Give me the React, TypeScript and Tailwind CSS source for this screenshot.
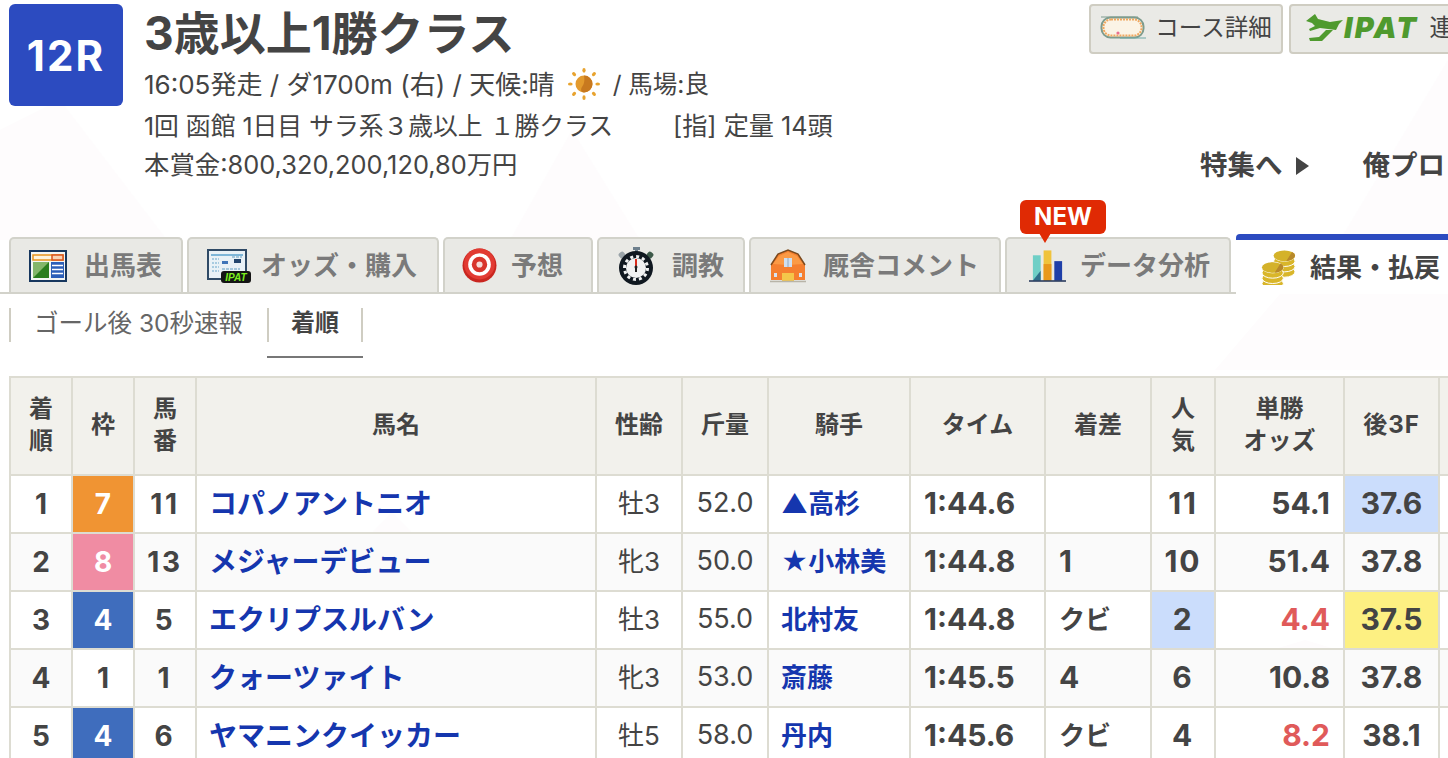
import React from 'react';

const FONT = "font-['Inter','Noto_Sans_CJK_JP',sans-serif]";

const WAKU: Record<number, string> = {
  1: 'bg-white text-[#444]',
  4: 'bg-[#3f6dbd] text-white',
  7: 'bg-[#f09433] text-white',
  8: 'bg-[#f08ca3] text-white',
};

interface Row {
  pos: number;
  waku: number;
  num: number;
  name: string;
  sex: string;
  weight: string;
  jockey: string;
  time: string;
  margin: string;
  pop: number;
  popHit?: boolean;
  odds: string;
  oddsRed?: boolean;
  last: string;
  lastBg?: string;
}

const rows: Row[] = [
  { pos: 1, waku: 7, num: 11, name: 'コパノアントニオ', sex: '牡3', weight: '52.0', jockey: '▲高杉', time: '1:44.6', margin: '', pop: 11, odds: '54.1', last: '37.6', lastBg: 'bg-[#cbddfc]' },
  { pos: 2, waku: 8, num: 13, name: 'メジャーデビュー', sex: '牝3', weight: '50.0', jockey: '★小林美', time: '1:44.8', margin: '1', pop: 10, odds: '51.4', last: '37.8' },
  { pos: 3, waku: 4, num: 5, name: 'エクリプスルバン', sex: '牡3', weight: '55.0', jockey: '北村友', time: '1:44.8', margin: 'クビ', pop: 2, popHit: true, odds: '4.4', oddsRed: true, last: '37.5', lastBg: 'bg-[#fdf082]' },
  { pos: 4, waku: 1, num: 1, name: 'クォーツァイト', sex: '牝3', weight: '53.0', jockey: '斎藤', time: '1:45.5', margin: '4', pop: 6, odds: '10.8', last: '37.8' },
  { pos: 5, waku: 4, num: 6, name: 'ヤマニンクイッカー', sex: '牡5', weight: '58.0', jockey: '丹内', time: '1:45.6', margin: 'クビ', pop: 4, odds: '8.2', oddsRed: true, last: '38.1' },
];

const TrackIcon = () => (
  <svg width="46" height="24" viewBox="0 0 46 24" className="shrink-0">
    <path d="M1 1H38" stroke="#7f9c90" strokeWidth="1" />
    <rect x="1.5" y="1.5" width="42" height="20" rx="9" fill="#fbf4e6" stroke="#7d9c8e" strokeWidth="2" />
    <rect x="3.5" y="3.5" width="38" height="16" rx="7.5" fill="none" stroke="#f0a860" strokeWidth="2" strokeDasharray="2 1" />
    <circle cx="18" cy="17" r="1.6" fill="#ea6f8f" />
    <path d="M20 22H46" stroke="#6fa9a6" strokeWidth="1" />
  </svg>
);

const HorseIcon = () => (
  <svg width="37" height="28" viewBox="0 0 37 28" className="shrink-0">
    <path d="M0 7L9 0l3 5 12 3 13-2-4 4-3 6-8-1-8-1-10 3-1-2 6-3-3-3z" fill="#4f9a2e" />
    <path d="M20 16h7L16 27H4l-1-3 10-1z" fill="#4f9a2e" />
  </svg>
);

const SunIcon = () => (
  <svg width="34" height="34" viewBox="0 0 36 36" className="shrink-0">
    <circle cx="18" cy="18" r="9" fill="#e39a2d" />
    <path d="M18 9a9 9 0 0 1 0 18c-3 0-4-3-2-6s3-6 2-12z" fill="#c8791f" />
    <g fill="#e8a32e">
      <ellipse cx="18" cy="3.5" rx="1.7" ry="2.5" />
      <ellipse cx="18" cy="32.5" rx="1.7" ry="2.5" />
      <ellipse cx="3.5" cy="18" rx="2.5" ry="1.7" />
      <ellipse cx="32.5" cy="18" rx="2.5" ry="1.7" />
      <ellipse cx="7.5" cy="7.5" rx="1.8" ry="2.4" transform="rotate(-45 7.5 7.5)" />
      <ellipse cx="28.5" cy="7.5" rx="1.8" ry="2.4" transform="rotate(45 28.5 7.5)" />
      <ellipse cx="7.5" cy="28.5" rx="1.8" ry="2.4" transform="rotate(45 7.5 28.5)" />
      <ellipse cx="28.5" cy="28.5" rx="1.8" ry="2.4" transform="rotate(-45 28.5 28.5)" />
    </g>
  </svg>
);

const CardIcon = () => (
  <svg width="38" height="32" viewBox="0 0 38 32" className="shrink-0">
    <rect x="1" y="1" width="36" height="30" fill="#f4f6f4" stroke="#17375e" strokeWidth="2" />
    <rect x="4" y="5" width="30" height="5" fill="#fdf3dc" stroke="#e8941c" strokeWidth="1.5" />
    <rect x="23" y="5" width="11" height="5" fill="#f7d3b4" stroke="#d9531e" strokeWidth="1.5" />
    <rect x="4" y="12" width="16" height="16" fill="#84b66b" />
    <path d="M20 12v16H4z" fill="#2a7d1e" />
    <rect x="22" y="12" width="13" height="16" fill="#2c5fb8" />
    <path d="M23 15.5h11M23 19.5h11M23 23.5h11" stroke="#fff" strokeWidth="1.4" />
  </svg>
);

const OddsIcon = () => (
  <svg width="44" height="34" viewBox="0 0 44 34" className="shrink-0">
    <rect x="1" y="1" width="38" height="29" fill="#e9f1f6" stroke="#2f4a66" strokeWidth="2" />
    <path d="M4 6h32" stroke="#7eb6d8" strokeWidth="2" />
    <path d="M5 10h7M5 14h7M5 18h7M5 22h7" stroke="#a8cbe0" strokeWidth="2" strokeDasharray="2 1" />
    <rect x="15" y="12" width="6" height="3" fill="#3f74b8" />
    <rect x="27" y="10" width="7" height="4" fill="#24466e" />
    <path d="M25 8h10M15 20h18" stroke="#8fb9d4" strokeWidth="1.5" strokeDasharray="3 1" />
    <rect x="14" y="22" width="30" height="12" rx="3" fill="#141414" />
    <text x="29" y="32" textAnchor="middle" fontSize="10" fontWeight="800" fontStyle="italic" fill="#7cf01c" fontFamily="'Liberation Sans',sans-serif">IPAT</text>
  </svg>
);

const TargetIcon = () => (
  <svg width="35" height="35" viewBox="0 0 34 34" className="shrink-0">
    <circle cx="17" cy="17" r="16.5" fill="#c9261f" />
    <circle cx="17" cy="15.5" r="15" fill="#e23b33" />
    <circle cx="17" cy="16" r="11" fill="#fff" />
    <circle cx="17" cy="16" r="7.5" fill="#d8352c" />
    <circle cx="17" cy="16" r="3" fill="#f6dcd8" />
  </svg>
);

const WatchIcon = () => (
  <svg width="38" height="38" viewBox="0 0 38 38" className="shrink-0">
    <rect x="16" y="0" width="7" height="3" fill="#6d7f8c" />
    <rect x="18" y="2" width="3" height="4" fill="#6d7f8c" />
    <rect x="2" y="5" width="6" height="6" rx="2" fill="#9aa3a8" transform="rotate(-40 5 8)" />
    <rect x="30" y="5" width="6" height="6" rx="2" fill="#3e5a4a" transform="rotate(40 33 8)" />
    <circle cx="19" cy="21" r="17" fill="#101820" />
    <circle cx="19" cy="21" r="10" fill="#f1f2f2" />
    <circle cx="19" cy="21" r="11.5" fill="none" stroke="#f1f2f2" strokeWidth="3" strokeDasharray="3 3" />
    <path d="M19 12v7" stroke="#d92c1c" strokeWidth="2" />
    <path d="M19 19v6" stroke="#222" strokeWidth="2" />
    <circle cx="19" cy="20" r="1.5" fill="#222" />
  </svg>
);

const BarnIcon = () => (
  <svg width="36" height="34" viewBox="0 0 36 34" className="shrink-0">
    <path d="M1 31V16L8 5l10-4 10 4 7 11v15z" fill="#f57f2f" />
    <path d="M1 16L8 5l10-4 10 4 7 11" fill="none" stroke="#7b4a1e" strokeWidth="1.5" />
    <path d="M3 15l6-8 9-4 9 4 6 8-15 1z" fill="#fb9a45" />
    <rect x="14" y="9" width="8" height="9" fill="#cfdff0" />
    <path d="M18 9v9" stroke="#8fa8c0" />
    <rect x="12" y="24" width="12" height="8" fill="#f4c64a" />
    <rect x="4" y="24" width="3" height="4" fill="#d7e4f2" />
    <rect x="29" y="24" width="3" height="4" fill="#d7e4f2" />
    <path d="M0 32.5h36" stroke="#b8b4a8" strokeWidth="1.5" />
  </svg>
);

const ChartIcon = () => (
  <svg width="37" height="34" viewBox="0 0 38 34" className="shrink-0">
    <rect x="4" y="6" width="8" height="26" fill="#6fcfc6" />
    <path d="M4 32l8-10v10z" fill="#2f6f8a" />
    <rect x="15" y="1" width="8" height="31" fill="#f0c33c" />
    <rect x="15" y="15" width="8" height="17" fill="#e8981c" />
    <rect x="26" y="12" width="8" height="20" fill="#1f3fa8" />
    <path d="M0 32.5h38" stroke="#1d2f55" strokeWidth="1.6" />
  </svg>
);

const Coin = ({ x, y, n }: { x: number; y: number; n: number }) => (
  <g>
    {Array.from({ length: n }).map((_, i) => (
      <ellipse key={i} cx={x} cy={y + (n - 1 - i) * 5.5} rx="11" ry="5.5" fill="#d9b62a" stroke="#fff" strokeWidth="1" />
    ))}
    <ellipse cx={x} cy={y} rx="11" ry="5.5" fill="#d4b22a" />
    <path d={`M${x + 2} ${y + 5.4}a11 5.5 0 0 0 9 -5.4a10 5 0 0 0 -3 -4z`} fill="#b8892a" />
  </g>
);

const CoinIcon = () => (
  <svg width="35" height="36" viewBox="0 0 36 37" className="shrink-0">
    <Coin x={24} y={7} n={4} />
    <Coin x={12} y={19} n={4} />
  </svg>
);

const tabs = [
  { label: 'オッズ・購入', icon: <OddsIcon />, cls: 'w-[252px] pl-[18px] gap-[10px]' },
  { label: '予想', icon: <TargetIcon />, cls: 'w-[150px] pl-[17px] gap-[14px]' },
  { label: '調教', icon: <WatchIcon />, cls: 'w-[148px] pl-[18px] gap-[17px]' },
  { label: '厩舎コメント', icon: <BarnIcon />, cls: 'w-[252px] pl-[19px] gap-[17px]' },
];

const TabBox = ({ cls, icon, label, children }: { cls: string; icon: React.ReactNode; label: string; children?: React.ReactNode }) => (
  <div className={`relative flex h-[55px] shrink-0 items-center rounded-t-[5px] border-2 border-b-0 border-[#d2d2ca] bg-[#e9e9e5] ${cls}`}>
    {icon}
    <span className="text-[26px] font-bold text-[#7a7a7a]">{label}</span>
    {children}
  </div>
);

const Th = ({ w, children }: { w: string; children?: React.ReactNode }) => (
  <th className={`border-2 border-[#dddcd2] bg-[#f2f1ec] pb-[3px] text-center text-[24px] leading-[32px] font-bold text-[#444] ${w}`}>{children}</th>
);

const Td = ({ className = '', children }: { className?: string; children?: React.ReactNode }) => (
  <td className={`border-2 border-[#dddcd2] pb-[1px] ${className}`}>{children}</td>
);

const App: React.FC = () => {
  return (
    <div className={`relative h-[758px] w-[1448px] overflow-hidden bg-white text-[#444] ${FONT}`}>
      {/* faint mountains behind the page */}
      <svg className="absolute inset-0" width="1448" height="758" viewBox="0 0 1448 758">
        <g fill="#fefcfd">
          <path d="M0 240V130L60 100 167 240z" />
          <path d="M510 240L572 130 640 240z" />
          <path d="M1340 240L1448 60V240z" />
          <path d="M1215 370L1280 294H1448V370z" />
          <path d="M392 512L372 533H412z" />
          <path d="M1305 640L1275 649H1335z" />
        </g>
      </svg>

      <div className="relative">
        {/* race header */}
        <div className="flex h-[234px] pt-[4px] pl-[9px]">
          <div className="flex h-[102px] w-[114px] shrink-0 items-center justify-center rounded-[6px] bg-[#2c4bc0] text-[42px] font-bold tracking-[0.05em] text-white">12R</div>
          <div className="ml-[21px] w-[780px] shrink-0">
            <h1 className="mt-[-1px] h-[62px] text-[46px] leading-[60px] font-bold text-[#444]">3歳以上1勝クラス</h1>
            <div className="flex h-[38px] items-center gap-[12px] text-[26px] text-[#444]">
              <span>16:05発走 / ダ1700m (右) / 天候:晴</span>
              <SunIcon />
              <span className="text-[24.5px]">/ 馬場:良</span>
            </div>
            <div className="mt-[5px] flex h-[38px] items-center text-[24.8px] text-[#444]">
              <span className="w-[529px]">1回 函館 1日目 サラ系３歳以上 １勝クラス</span>
              <span className="text-[25.2px]">[指] 定量 14頭</span>
            </div>
            <div className="h-[38px] text-[25.4px] leading-[38px] text-[#444]">本賞金:800,320,200,120,80万円</div>
          </div>
          <div className="ml-[165px] flex shrink-0 flex-col">
            <div className="flex gap-[6px]">
              <div className="flex h-[50px] w-[194px] items-center justify-center gap-[9px] rounded-[4px] border-2 border-[#cfcdc2] bg-[#eaeae6] pb-[2px] text-[23.5px]">
                <TrackIcon />
                <span>コース詳細</span>
              </div>
              <div className="flex h-[50px] w-[240px] items-center gap-[1px] rounded-[4px] border-2 border-[#cfcdc2] bg-[#eaeae6] pb-[2px] pl-[15px] text-[24px]">
                <HorseIcon />
                <span className="text-[29px] font-black tracking-[0.08em] text-[#4f9a2e] italic">IPAT</span>
                <span className="ml-[10px]">連携</span>
              </div>
            </div>
            <div className="mt-[91px] ml-[111px] flex items-center text-[27.5px] font-bold whitespace-nowrap">
              <span>特集へ</span>
              <span className="mr-[54px] ml-[13px] h-0 w-0 border-y-[9px] border-l-[13px] border-y-transparent border-l-[#444]" />
              <span>俺プロ</span>
            </div>
          </div>
        </div>

        {/* tabs */}
        <div className="flex h-[60px] items-end gap-[4px] border-b-2 border-[#d2d2ca] pl-[9px]">
          <TabBox cls="w-[174px] pl-[18px] gap-[17px]" icon={<CardIcon />} label="出馬表" />
          {tabs.map((t) => (
            <TabBox key={t.label} cls={t.cls} icon={t.icon} label={t.label} />
          ))}
          <TabBox cls="w-[226px] pl-[22px] gap-[14px]" icon={<ChartIcon />} label="データ分析">
            <div className="absolute top-[-39px] left-[13px] flex h-[34px] w-[86px] items-center justify-center rounded-[6px] bg-[#e02a04] text-[24px] font-bold text-white">
              NEW
              <span className="absolute top-[33px] left-[19px] h-0 w-0 border-x-[6px] border-t-[10px] border-x-transparent border-t-[#e02a04]" />
            </div>
          </TabBox>
          <div className="relative -mb-[2px] ml-[1px] flex h-[60px] w-[230px] shrink-0 items-center gap-[14px] rounded-t-[4px] border-t-[6px] border-[#2c4bc0] bg-white pl-[25px]">
            <CoinIcon />
            <span className="text-[26px] font-bold text-[#444]">結果・払戻</span>
          </div>
        </div>

        {/* sub tabs */}
        <div className="flex h-[64px] pt-[14px] pl-[9px]">
          <div className="flex h-[34px] w-[258px] items-center border-l-2 border-[#cfcdc2] pb-[4px] pl-[23px] text-[24.5px] text-[#666]">ゴール後 30秒速報</div>
          <div className="relative flex h-[34px] w-[96px] items-center justify-center border-x-2 border-[#cfcdc2] pb-[4px] text-[24px] font-bold">
            着順
            <span className="absolute top-[48px] -right-[2px] -left-[2px] h-[2px] bg-[#777]" />
          </div>
        </div>

        {/* result table */}
        <div className="mt-[18px] ml-[9px]">
          <table className="w-[1480px] table-fixed border-collapse">
            <thead>
              <tr className="h-[98px]">
                <Th w="w-[62px]"><>着<br />順</></Th>
                <Th w="w-[62px]">枠</Th>
                <Th w="w-[62px]"><>馬<br />番</></Th>
                <Th w="w-[400px]">馬名</Th>
                <Th w="w-[86px]">性齢</Th>
                <Th w="w-[86px]">斤量</Th>
                <Th w="w-[142px]">騎手</Th>
                <Th w="w-[135px]">タイム</Th>
                <Th w="w-[106px]">着差</Th>
                <Th w="w-[64px]"><>人<br />気</></Th>
                <Th w="w-[129px]"><>単勝<br />オッズ</></Th>
                <Th w="w-[95px] tracking-[0.04em]">後3F</Th>
                <Th w="w-[51px]" />
              </tr>
            </thead>
            <tbody>
              {rows.map((r, i) => (
                <tr key={r.pos} className={`h-[58px] ${i % 2 === 1 ? 'bg-[#fafafa]' : ''}`}>
                  <Td className="text-center text-[28px] font-bold">{r.pos}</Td>
                  <Td className={`text-center text-[28px] font-bold ${WAKU[r.waku]}`}>{r.waku}</Td>
                  <Td className="text-center text-[28px] font-bold tracking-[0.1em]">{r.num}</Td>
                  <Td className="pl-[12px] text-[28px] font-bold whitespace-nowrap text-[#1536ae]">{r.name}</Td>
                  <Td className="text-center text-[26px] text-[#444]">{r.sex}</Td>
                  <Td className="text-center text-[27px] text-[#444]">{r.weight}</Td>
                  <Td className="pl-[12px] text-[26px] font-bold whitespace-nowrap text-[#1536ae]">{r.jockey}</Td>
                  <Td className="pl-[13px] text-[30px] font-bold">{r.time}</Td>
                  <Td className={`pl-[13px] font-bold ${r.margin === 'クビ' ? 'text-[26px]' : 'text-[30px]'}`}>{r.margin}</Td>
                  <Td className={`text-center text-[30px] font-bold tracking-[0.06em] ${r.popHit ? 'bg-[#cbddfc]' : ''}`}>{r.pop}</Td>
                  <Td className={`pr-[13px] text-right text-[30px] font-bold ${r.oddsRed ? 'text-[#e05a5a]' : ''}`}>{r.odds}</Td>
                  <Td className={`text-center text-[30px] font-bold ${r.lastBg ?? ''}`}>{r.last}</Td>
                  <Td />
                </tr>
              ))}
            </tbody>
          </table>
        </div>
      </div>
    </div>
  );
};

export default App;
